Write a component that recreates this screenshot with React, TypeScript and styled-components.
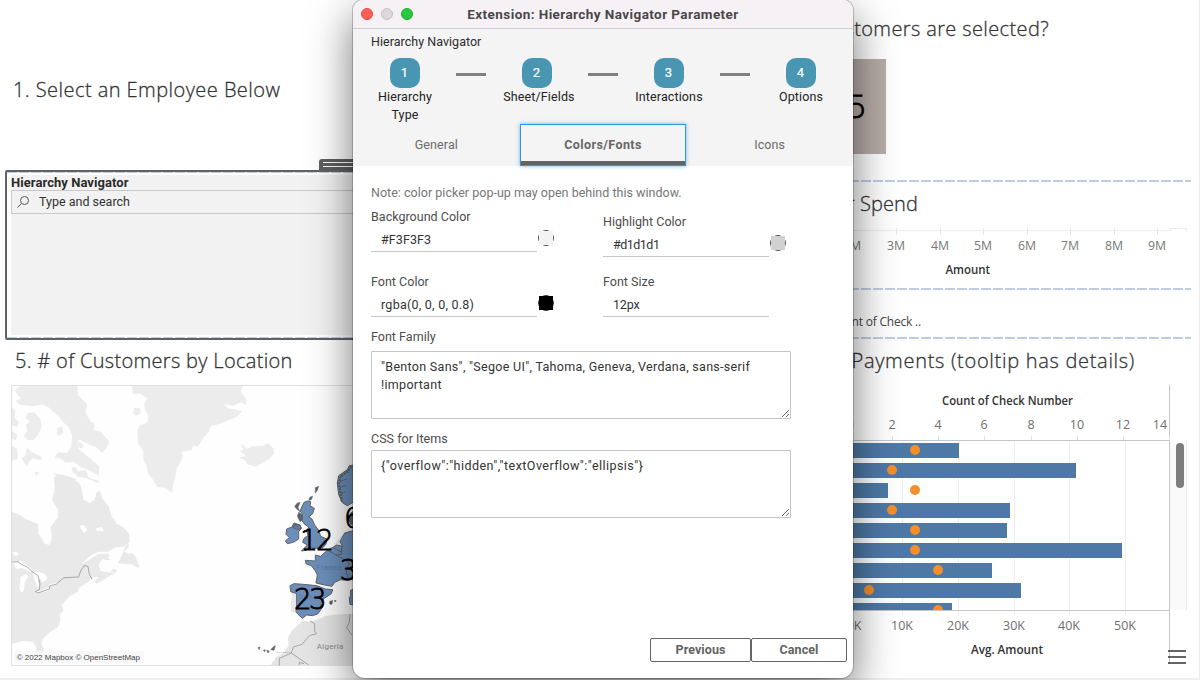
import React from "react";
import styled, { createGlobalStyle } from "styled-components";

const Global = createGlobalStyle`
  *, *::before, *::after { box-sizing: border-box; }
  body { margin: 0; background: #fff; overflow: hidden; }
`;

const ui = `Roboto, "Liberation Sans", sans-serif`;
const book = `"Open Sans", "Noto Sans", sans-serif`;
const wide = `"DejaVu Sans", Verdana, sans-serif`;

/* ---------- dashboard ---------- */

const Page = styled.main`
  position: relative;
  display: flex;
  width: 1200px;
  height: 680px;
  overflow: hidden;
  background: #fff;
  border-right: 1px solid #ececec;
  font-family: ${ui};
`;

const LeftPane = styled.section`
  width: 390px;
  flex: none;
  display: flex;
  flex-direction: column;
`;

const RightPane = styled.section`
  flex: 1;
  min-width: 0;
  display: flex;
  flex-direction: column;
  align-items: flex-end;
`;

const SheetTitle = styled.h2<{ $tracking?: number }>`
  margin: 0;
  height: 28px;
  font: 300 20px/28px ${book};
  letter-spacing: ${(p) => p.$tracking ?? 0}px;
  color: #333;
  -webkit-text-stroke: 0.3px #333;
  white-space: nowrap;
`;

const EmployeeTitle = styled.div`
  height: 159px;
  padding: 76px 0 0 13px;
`;

const HandleRow = styled.div`
  height: 11px;
  padding-left: 319px;
`;

const Handle = styled.div`
  height: 11px;
  padding: 3px 0 0 4px;
  border-radius: 3px 0 0 0;
  background: #5f5f5f;
  display: flex;
  flex-direction: column;
  gap: 3px;
`;

const Grip = styled.i`
  height: 1px;
  background: #fff;
`;

const Dashes = styled.div<{ $from?: number; $h?: number }>`
  height: ${(p) => p.$h ?? 2}px;
  flex: none;
  align-self: stretch;
  background: repeating-linear-gradient(to right, #bfcde3 0 10px, transparent 10px 12px);
  background-position-x: ${(p) => p.$from ?? 0}px;
`;

const NavZone = styled.div`
  height: 170px;
  margin-left: 5px;
  border: 2px solid #606266;
  border-radius: 2px;
  display: flex;
  flex-direction: column;
`;

const NavPanel = styled.div`
  flex: 1;
  margin: 2px 0 2px 4px;
  background: #f2f2f2;
  display: flex;
  flex-direction: column;
`;

const NavTitle = styled.div`
  height: 15px;
  font: 700 13px/16px ${ui};
  letter-spacing: 0.06px;
  color: #2b2b2b;
`;

const Search = styled.div`
  height: 24px;
  border: 1px solid #c8c8c8;
  padding-left: 4px;
  display: flex;
  align-items: center;
  gap: 9px;
  font: 400 12.5px/22px ${ui};
  color: #333;
`;

const LocationTitle = styled.div`
  height: 45px;
  padding: 7px 0 0 15px;
`;

const MapSvg = styled.svg`
  margin-left: 11px;
  width: 343px;
  height: 281px;
  display: block;
  flex: none;
`;

const SelectedTitle = styled.div`
  height: 59px;
  padding: 15px 150px 0 0;
`;

const CountBox = styled.div`
  width: 90px;
  height: 95px;
  margin-right: 313px;
  padding-right: 19px;
  background: #b8ada8;
  font: 300 32px/97px ${wide};
  -webkit-text-stroke: 0.9px #000;
  text-align: right;
  color: #000;
`;

const DashSlot = styled.div<{ $top: number }>`
  width: 440px;
  padding: ${(p) => p.$top}px 8px 0 0;
  display: flex;
  flex-direction: column;
`;

const SpendTitle = styled.div`
  height: 43px;
  padding: 8px 281px 0 0;
`;

const ChartSvg = styled.svg`
  width: 359px;
  display: block;
  flex: none;
`;

const CheckLabel = styled.div`
  height: 47px;
  padding: 22px 278px 0 0;
  font: 400 12px/20px ${book};
  letter-spacing: -0.2px;
  color: #444;
`;

const PaymentsTitle = styled.div`
  height: 46px;
  padding: 8px 64px 0 0;
`;

const BottomEdge = styled.div`
  position: absolute;
  left: 0;
  right: 0;
  bottom: 0;
  height: 2px;
  background: #f0f0f0;
`;

/* ---------- dialog window ---------- */

const Dialog = styled.section`
  position: absolute;
  left: 353px;
  top: 0;
  width: 500px;
  height: 678px;
  border-radius: 10px 10px 12px 12px;
  background: #fff;
  box-shadow: 0 0 0 1px rgba(0, 0, 0, 0.2), 0 16px 44px rgba(0, 0, 0, 0.55);
  display: flex;
  flex-direction: column;
`;

const TitleBar = styled.header`
  height: 29px;
  border-bottom: 1px solid #d2ced1;
  border-radius: 10px 10px 0 0;
  background: #f6f1f5;
  display: grid;
  grid-template-columns: 60px 1fr 60px;
  align-items: center;
`;

const Lights = styled.div`
  display: flex;
  gap: 8px;
  padding-left: 8px;
`;

const Light = styled.i<{ $fill: string; $ring: string }>`
  width: 12px;
  height: 12px;
  border-radius: 50%;
  background: ${(p) => p.$fill};
  border: 1px solid ${(p) => p.$ring};
`;

const WindowTitle = styled.h1`
  margin: 0;
  text-align: center;
  font: 700 13.5px/26px ${ui};
  letter-spacing: 0.42px;
  color: #4a474a;
`;

const Head = styled.div`
  height: 137px;
  background: #f4f4f4;
  display: flex;
  flex-direction: column;
`;

const Crumb = styled.div`
  height: 29px;
  padding: 4px 0 0 18px;
  font: 400 12.5px/18px ${ui};
  letter-spacing: 0.03px;
  color: #2c2c2c;
`;

const Steps = styled.div`
  height: 66px;
  padding-left: 19px;
  display: grid;
  grid-template-columns: repeat(7, 66px);
`;

const Step = styled.div`
  display: flex;
  flex-direction: column;
  align-items: center;
`;

const StepNumber = styled.b`
  width: 30px;
  height: 30px;
  flex: none;
  padding-right: 1px;
  border-radius: 10px;
  background: #4996b2;
  color: #fff;
  font: 400 13px/29px ${ui};
  -webkit-text-stroke: 0.2px #fff;
  text-align: center;
`;

const StepLabel = styled.span<{ $shift?: number }>`
  font: 400 12.5px/18px ${ui};
  letter-spacing: 0.12px;
  color: #222;
  text-align: center;
  padding-left: ${(p) => p.$shift ?? 0}px;
`;

const StepBar = styled.i`
  width: 30px;
  height: 3px;
  margin: 15px auto 0;
  background: #808080;
`;

const Tabs = styled.div`
  height: 42px;
  display: grid;
  grid-template-columns: repeat(3, 1fr);
`;

const Tab = styled.button<{ $active?: boolean }>`
  margin: 0;
  padding: 0;
  border: 0;
  background: transparent;
  font: ${(p) => (p.$active ? 700 : 400)} 12.5px/40px ${ui};
  letter-spacing: ${(p) => (p.$active ? 0.42 : 0.1)}px;
  color: ${(p) => (p.$active ? "#666" : "#6a6a6a")};
  ${(p) =>
    p.$active &&
    `border: 1px solid #2f96e0;
     box-shadow: inset 0 -4px 0 #636363, 0 0 4px rgba(59, 155, 224, 0.75);
     line-height: 38px;`}
`;

const Body = styled.div`
  flex: 1;
  padding: 17px 6px 16px 18px;
  display: flex;
  flex-direction: column;
`;

const Note = styled.p`
  margin: 0;
  height: 24px;
  font: 400 12.5px/20px ${ui};
  letter-spacing: 0.02px;
  color: #777;
`;

const Fields = styled.div`
  display: grid;
  grid-template-columns: 232px 200px;
  height: 120px;
  grid-template-rows: 65px 55px;
`;

const Field = styled.label<{ $drop?: number }>`
  display: flex;
  flex-direction: column;
  padding-top: ${(p) => p.$drop ?? 0}px;
`;

const Label = styled.span`
  height: 20px;
  font: 400 12.5px/20px ${ui};
  letter-spacing: 0.02px;
  color: #4c4c4c;
`;

const InputRow = styled.span`
  display: flex;
`;

const Input = styled.input<{ $tracking: number }>`
  width: 166px;
  height: 25px;
  border: 0;
  border-bottom: 1px solid #c8c8c8;
  outline: 0;
  padding: 1px 10px 0;
  background: transparent;
  font: 400 12.5px/20px ${ui};
  letter-spacing: ${(p) => p.$tracking}px;
  color: #333;
`;

const Swatch = styled.svg`
  width: 17px;
  height: 17px;
  margin-top: 3px;
`;

const Area = styled.textarea<{ $tracking: number }>`
  width: 420px;
  height: 68px;
  display: block;
  margin: 0;
  padding: 6px 9px;
  border: 1px solid #c4c4c4;
  border-radius: 1px;
  outline: 0;
  font: 400 12.5px/18px ${ui};
  letter-spacing: ${(p) => p.$tracking}px;
  color: #333;
`;

const AreaField = styled.label<{ $h: number; $gap: number }>`
  display: flex;
  flex-direction: column;
  height: ${(p) => p.$h}px;
  gap: ${(p) => p.$gap}px;
`;

const Actions = styled.footer`
  margin-top: auto;
  display: flex;
  justify-content: flex-end;
`;

const Button = styled.button<{ $w: number }>`
  width: ${(p) => p.$w}px;
  height: 24px;
  padding: 0;
  border: 1px solid #666;
  border-radius: 2px;
  background: #fff;
  font: 700 12.5px/20px ${ui};
  letter-spacing: 0.08px;
  color: #636363;
`;

/* ---------- drawings ---------- */

const land = "#e9e9e9";

function LocationMap() {
  return (
    <MapSvg viewBox="33 180 1029 843" preserveAspectRatio="none">
      <rect x="34.5" y="181.5" width="1100" height="840" fill="#fefefe" stroke="#e0e0e0" strokeWidth="3" />
      <g fill={land}>
        <path fill="#ececec" d="M66 183H232L234 210 262 238 256 262 272 290 284 296 280 316 300 318 328 350 318 372 306 384 288 366 270 360 240 344 232 348 236 372 268 398 298 424 296 452 276 440 242 426 222 410 200 414 180 400 164 400 172 382 200 384 214 366 216 330 206 306 188 290 176 272 160 262 148 248 126 238 100 244 60 240 46 226 64 222 46 200 50 190Z" />
        <path fill="#ececec" d="M36 248 46 258 44 278 56 292 52 306 36 300ZM84 264 102 262 120 280 126 302 116 328 102 344 84 346 72 334 82 318 78 300 90 290 76 280ZM36 318 52 330 48 344 36 342ZM36 362 50 370 54 400 36 408ZM80 368 100 384 126 396 124 406 98 400 88 410 80 424 64 400 76 392ZM172 310 186 304 190 322 178 332 170 326ZM104 440 118 442 108 454ZM230 348 244 354 252 366 240 370ZM240 388 254 390 256 402 246 400ZM214 428 226 426 234 438 258 436 266 458 298 468 292 474 260 460 236 456 218 440ZM160 444 200 452 230 462 222 468 196 456 170 456Z" />
        <path d="M36 562 56 568 78 582 114 598 116 626 126 642 134 656 148 660 156 640 152 606 174 576 174 554 156 524 164 498 162 456 182 450 214 458 240 476 246 496 250 524 268 534 284 524 290 502 299 496 306 520 326 544 334 572 350 596 372 608 388 626 388 652 374 664 344 668 324 680 296 680 270 692 246 718 268 704 298 686 326 686 328 696 308 702 296 718 302 738 336 744 348 732 350 740 320 758 290 776 283 770 296 756 280 756 264 772 236 788 234 800 210 812 186 840 190 858 178 868 182 884 174 906 150 922 128 942 124 956 132 976 122 992 36 992Z" />
        <path d="M384 656 388 662 374 680 384 686 396 684 406 694 412 708 420 728 408 726 394 718 366 716 354 714 366 690 376 664ZM340 730 346 736 330 744ZM316 696 336 706 310 704Z" />
        <path fill="#ececec" d="M396 183H728L722 200 738 222 738 240 724 232 700 242 672 238 684 250 728 258 712 274 690 284 660 296 632 304 628 318 612 336 592 366 582 360 574 376 546 380 548 398 540 414 530 430 526 458 520 474 516 503 494 488 472 486 456 460 444 446 440 424 430 404 430 380 414 352 412 316 420 300 442 294 446 272 436 256 432 238 442 220 420 206 398 206ZM404 248 420 250 422 266 408 272 398 264Z" />
        <path fill="#ececec" d="M722 356 732 362 738 372 760 364 790 362 804 354 820 370 822 386 808 402 780 418 768 425 742 418 734 404 716 398 738 392 720 378 730 374Z" />
        <path fill="#e4e4e4" d="M907 886 896 898 876 916 864 938 866 962 850 984 826 998 812 1022H1062V866L1020 868 978 872 948 886 928 890Z" />
        <path d="M876 804H892L888 864 874 862 872 840ZM1002 662 1010 648 1034 624 1040 650 1024 662Z" />
      </g>
      <g fill="#fff">
        <path d="M36 708 62 708 84 722 96 734 92 742 66 730 50 732ZM62 756 80 746 86 754 74 772 72 796 64 804 58 790ZM98 740 120 742 136 748 142 762 128 772 120 762 112 764 118 780 114 790 106 772ZM106 800 128 796 148 786 142 798 110 806ZM148 778 172 774 164 782 148 782ZM38 682 50 680 58 690 44 692ZM238 604 252 600 262 616 252 624ZM288 610 306 606 312 618 290 618ZM36 956 70 948 98 950 110 968 104 992 36 992Z" />
      </g>
      <g fill="none" stroke="#999" strokeWidth="2.5">
        <path d="M36 711 54 710 64 718 82 726 94 738 114 752 120 776 118 794 106 800 114 804 148 792 150 782 168 778 192 758 236 756 242 738 252 722 264 724 268 748 276 762" />
        <path d="M930 888 944 896 944 918 950 926 928 932 906 958 880 966 874 984 838 1000V1022M874 984 926 1020M898 1020V1012L912 1016M1050 868 1048 892 1040 908 1056 930" />
        <path strokeDasharray="3 3" d="M830 982H874" />
      </g>
      <g fill="#6c8fba" stroke="#5d646c" strokeWidth="3" strokeLinejoin="round">
        <path d="M912 532 922 528 932 530 930 542 943 550 938 566 926 576 936 582 944 600 956 616 962 634 980 642 978 658 968 668 948 670 930 668 918 676 904 678 922 660 908 652 912 640 924 632 920 618 926 606 912 596 904 584 908 568 900 558Z" />
        <path d="M860 612 876 606 882 594 900 600 904 610 896 620 896 642 880 652 862 656 856 648 868 638 858 628Z" />
        <path d="M880 598 900 600 904 610 892 614 878 608Z" fill="#5f7897" />
        <path d="M916 706 946 708 946 690 962 694 982 676 1000 666 1010 660 1028 664 1020 650 1034 624 1062 616V762L1040 766 1022 764 1004 772 996 784 974 780 948 774 952 750 946 738 934 722 918 716Z" />
        <path fill="none" d="M984 676 1008 690 1024 688 1026 664M1008 690 1034 704 1048 714 1038 740 1046 762M1000 668 1026 682" />
        <path d="M870 782 882 776 910 778 950 782 976 792 998 794 994 806 970 822 962 836 968 846 954 866 938 872 920 870 908 880 894 868 888 860 890 838 890 806 872 800Z" />
        <path d="M1062 420 1048 422 1042 434 1016 452 1012 474 1016 508 1026 532 1042 542 1062 530Z" />
        <path fill="none" strokeWidth="8" d="M1054 424 1042 440 1022 454 1016 478 1022 506 1026 528" strokeDasharray="6 3" />
        <path fill="none" strokeWidth="3" d="M1020 470 1040 462M1020 488 1038 480M1022 508 1036 500" />
        <path fill="#56606d" d="M1062 558 1052 564 1046 580 1052 598 1062 602Z" />
        <path d="M1062 792 1052 796V812L1048 818 1050 838 1062 840Z" />
      </g>
      <g fill="#5c636b" stroke="#5c636b" strokeWidth="1.5">
        <path d="M946 488 956 484 952 496 946 504ZM930 516 938 514 934 524 926 526ZM892 534 900 532 894 548 900 560 890 552 884 544ZM896 562 906 568 908 584 900 590 892 574ZM988 830 998 826 996 838 990 838ZM1002 828 1008 826V830ZM774 968 780 966 778 974ZM790 976 796 974 794 980ZM800 976 808 978 804 984ZM812 974 822 964 826 962 822 976Z" />
      </g>
      <g fontFamily={ui} fontSize="24">
        <text x="949" y="735" textLength="76" fill="#56779f">France</text>
        <text x="895" y="822" textLength="66" fill="#5f82ac">Spain</text>
        <text x="950" y="971" textLength="80" fill="#8a8a8a">Algeria</text>
      </g>
      <g fontFamily={wide} fontSize="83" fontWeight="300" fill="#000" stroke="#000" strokeWidth="2.6">
        <text x="901" y="675" textLength="100">12</text>
        <text x="882" y="852" textLength="98">23</text>
        <text x="1032" y="609">6</text>
        <text x="1019" y="765">3</text>
      </g>
      <rect x="42" y="978" width="390" height="36" fill="#f7f7f7" opacity=".85" />
      <text x="50" y="1004" fontFamily={`"Liberation Sans", sans-serif`} fontSize="23" textLength="370" lengthAdjust="spacingAndGlyphs" fill="#444">
        © 2022 Mapbox © OpenStreetMap
      </text>
    </MapSvg>
  );
}

const spendTicks = [
  { label: "2M", x: 852 },
  { label: "3M", x: 896 },
  { label: "4M", x: 940 },
  { label: "5M", x: 983 },
  { label: "6M", x: 1027 },
  { label: "7M", x: 1070 },
  { label: "8M", x: 1114 },
  { label: "9M", x: 1157 },
];

function SpendAxis() {
  return (
    <ChartSvg viewBox="840 225 359 63" height="63">
      <path d="M840 230.5H1170M1170.500 228V231M1170 228.500H1187M1186.500 228V231" stroke="#ececec" fill="none" />
      {spendTicks.map((t) => (
        <g key={t.label}>
          <path d={`M${t.x + 0.5} 228V235`} stroke="#e6e6e6" />
          <text x={t.x} y="250" textAnchor="middle" fontFamily={book} fontSize="12.300" fill="#787878">
            {t.label}
          </text>
        </g>
      ))}
      <text x="945.500" y="274" textLength="44.500" fontFamily={book} fontWeight="600" fontSize="12" fill="#333" lengthAdjust="spacingAndGlyphs">
        Amount
      </text>
    </ChartSvg>
  );
}

const payments = [
  { end: 959, dot: 915 },
  { end: 1076, dot: 892 },
  { end: 888, dot: 915 },
  { end: 1010, dot: 892 },
  { end: 1007, dot: 915 },
  { end: 1122, dot: 915 },
  { end: 992, dot: 938 },
  { end: 1021, dot: 869 },
  { end: 952, dot: 938 },
];

const countTicks: [string, number, number][] = [
  ["0", 850, 850],
  ["2", 892, 892],
  ["4", 938, 938],
  ["6", 984, 984],
  ["8", 1031, 1031],
  ["10", 1077, 1077],
  ["12", 1123, 1123],
  ["14", 1160, 1169],
];

const amountTicks: [string, number][] = [
  ["0K", 854],
  ["10K", 902],
  ["20K", 958],
  ["30K", 1014],
  ["40K", 1069],
  ["50K", 1125],
];

function PaymentsChart() {
  return (
    <ChartSvg viewBox="840 385 359 290" height="290">
      <defs>
        <clipPath id="plot">
          <rect x="840" y="441" width="329" height="169" />
        </clipPath>
      </defs>
      <rect x="1170" y="440" width="17" height="170" fill="#fafafa" />
      <path d="M1186.500 440V610" stroke="#e9e9e9" />
      <rect x="1176" y="443" width="8" height="45" rx="4" fill="#7d7d7d" />
      {amountTicks.slice(1).map(([l, x]) => (
        <path key={l} d={`M${x + 0.5} 441V615`} stroke="#ededed" />
      ))}
      <g clipPath="url(#plot)">
        {payments.map((p, i) => (
          <g key={i}>
            <rect x="840" y={443 + i * 20} width={p.end - 840} height="15" fill="#4e79a7" />
            <circle cx={p.dot} cy={450 + i * 20} r="5" fill="#f28e2b" />
          </g>
        ))}
      </g>
      <path d="M840 440.500H1169M840 610.500H1169M1169.500 385V664" stroke="#c6c6c6" />
      <g fontFamily={book} fontSize="12.500" fill="#6e6e6e" textAnchor="middle">
        {countTicks.map(([l, x, t]) => (
          <g key={l}>
            <path d={`M${t + 0.5} 436V440`} stroke="#e0e0e0" />
            <text x={x} y="429">{l}</text>
          </g>
        ))}
        {amountTicks.map(([l, x]) => (
          <text key={l} x={x} y="630">{l}</text>
        ))}
      </g>
      <g fontFamily={book} fontSize="12" fontWeight="600" fill="#333">
        <text x="942" y="405" textLength="131" lengthAdjust="spacingAndGlyphs">Count of Check Number</text>
        <text x="971" y="654" textLength="72" lengthAdjust="spacingAndGlyphs">Avg. Amount</text>
      </g>
      <path d="M1168 651H1186M1168 657H1186M1168 663H1186" stroke="#333" strokeWidth="1.600" />
    </ChartSvg>
  );
}

function ColorSwatch({ color }: { color: string }) {
  return (
    <Swatch viewBox="0 0 17 17">
      <circle cx="9" cy="8" r="7.400" fill={color} stroke="#333" />
      <rect x="2" y="1" width="14" height="14" fill={color} />
    </Swatch>
  );
}

function TextField(props: { label: string; value: string; color?: string; drop?: number; tracking?: number }) {
  return (
    <Field $drop={props.drop}>
      <Label>{props.label}</Label>
      <InputRow>
        <Input defaultValue={props.value} spellCheck={false} $tracking={props.tracking ?? 0} />
        {props.color && <ColorSwatch color={props.color} />}
      </InputRow>
    </Field>
  );
}

const steps = ["Hierarchy Type", "Sheet/Fields", "Interactions", "Options"];

export default function App() {
  return (
    <>
      <Global />
      <Page>
        <LeftPane>
          <EmployeeTitle>
            <SheetTitle $tracking={0.45}>1. Select an Employee Below</SheetTitle>
          </EmployeeTitle>
          <HandleRow>
            <Handle>
              <Grip />
              <Grip />
            </Handle>
          </HandleRow>
          <NavZone>
            <Dashes $h={1} />
            <NavPanel>
              <NavTitle>Hierarchy Navigator</NavTitle>
              <Search>
                <svg width="14" height="14" viewBox="0 0 14 14" fill="none" stroke="#555" strokeWidth="1">
                  <circle cx="8.500" cy="5.500" r="4" />
                  <path d="M5.500 8.500 1.500 12.500" />
                </svg>
                Type and search
              </Search>
            </NavPanel>
            <Dashes $h={1} />
          </NavZone>
          <LocationTitle>
            <SheetTitle $tracking={0.32}>5. # of Customers by Location</SheetTitle>
          </LocationTitle>
          <LocationMap />
        </LeftPane>

        <RightPane>
          <SelectedTitle>
            <SheetTitle $tracking={0.38}>customers are selected?</SheetTitle>
          </SelectedTitle>
          <CountBox>5</CountBox>
          <DashSlot $top={26}>
            <Dashes $from={6} />
          </DashSlot>
          <SpendTitle>
            <SheetTitle $tracking={0.1}>Customer Spend</SheetTitle>
          </SpendTitle>
          <SpendAxis />
          <DashSlot $top={0}>
            <Dashes $from={6} />
          </DashSlot>
          <CheckLabel>Count of Check ..</CheckLabel>
          <DashSlot $top={0}>
            <Dashes $from={6} />
          </DashSlot>
          <PaymentsTitle>
            <SheetTitle $tracking={0.7}>Payments (tooltip has details)</SheetTitle>
          </PaymentsTitle>
          <PaymentsChart />
        </RightPane>

        <BottomEdge />

        <Dialog>
          <TitleBar>
            <Lights>
              <Light $fill="#ff5f57" $ring="#e2473f" />
              <Light $fill="#dcd7db" $ring="#c6c1c5" />
              <Light $fill="#28c840" $ring="#1aab29" />
            </Lights>
            <WindowTitle>Extension: Hierarchy Navigator Parameter</WindowTitle>
          </TitleBar>
          <Head>
            <Crumb>Hierarchy Navigator</Crumb>
            <Steps>
              {steps.map((label, i) => (
                <React.Fragment key={label}>
                  {i > 0 && <StepBar />}
                  <Step>
                    <StepNumber>{i + 1}</StepNumber>
                    <StepLabel $shift={i === 1 ? 4 : 0}>{label}</StepLabel>
                  </Step>
                </React.Fragment>
              ))}
            </Steps>
            <Tabs>
              <Tab>General</Tab>
              <Tab $active>Colors/Fonts</Tab>
              <Tab>Icons</Tab>
            </Tabs>
          </Head>
          <Body>
            <Note>Note: color picker pop-up may open behind this window.</Note>
            <Fields>
              <TextField label="Background Color" value="#F3F3F3" color="#f3f3f3" tracking={0.1} />
              <TextField label="Highlight Color" value="#d1d1d1" color="#d1d1d1" drop={5} tracking={-0.5} />
              <TextField label="Font Color" value="rgba(0, 0, 0, 0.8)" color="#000" tracking={0.25} />
              <TextField label="Font Size" value="12px" tracking={-0.2} />
            </Fields>
            <AreaField $h={102} $gap={4}>
              <Label>Font Family</Label>
              <Area
                $tracking={0.3}
                spellCheck={false}
                defaultValue={`"Benton Sans", "Segoe UI", Tahoma, Geneva, Verdana, sans-serif !important`}
              />
            </AreaField>
            <AreaField $h={90} $gap={1}>
              <Label>CSS for Items</Label>
              <Area $tracking={0.45} spellCheck={false} defaultValue={`{"overflow":"hidden","textOverflow":"ellipsis"}`} />
            </AreaField>
            <Actions>
              <Button $w={101}>Previous</Button>
              <Button $w={96}>Cancel</Button>
            </Actions>
          </Body>
        </Dialog>
      </Page>
    </>
  );
}
